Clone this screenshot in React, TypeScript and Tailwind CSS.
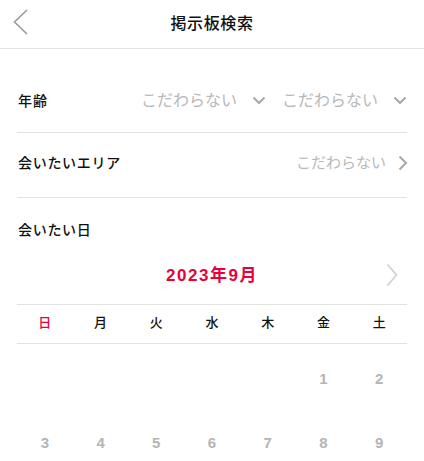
import React from 'react'

const font = { fontFamily: '"Liberation Sans", "Noto Sans CJK JP", "Noto Sans", sans-serif' }

function ChevronDown() {
  return (
    <svg width="14" height="9" viewBox="0 0 14 9" className="shrink-0">
      <path d="M1.5 1.5 L7 7 L12.5 1.5" fill="none" stroke="#a8a8a8" strokeWidth="2" />
    </svg>
  )
}

function ChevronRight({ className = '' }: { className?: string }) {
  return (
    <svg width="10" height="16" viewBox="0 0 10 16" className={className}>
      <path d="M1.5 1.5 L8 8 L1.5 14.5" fill="none" stroke="#a8a8a8" strokeWidth="2" />
    </svg>
  )
}

const weekdays = ['日', '月', '火', '水', '木', '金', '土']
const days: (number | null)[] = [null, null, null, null, null, 1, 2, 3, 4, 5, 6, 7, 8, 9]

export default function App() {
  return (
    <div className="h-[461px] w-[424px] overflow-hidden bg-white text-[#111]" style={font}>
      {/* ヘッダー */}
      <header className="relative flex h-[49px] items-center justify-center border-b border-[#e3e3e3]">
        <button className="absolute left-[13px] top-[9px]">
          <svg width="16" height="26" viewBox="0 0 16 26">
            <path d="M14 1 L1.5 13 L14 25" fill="none" stroke="#9a9a9a" strokeWidth="1.6" />
          </svg>
        </button>
        <h1 className="text-[16px] font-medium tracking-[0.04em]">掲示板検索</h1>
      </header>

      <div className="px-[17px] pt-[20px]">
        <div className="flex h-[64px] items-center border-b border-[#e3e3e3]">
          <span className="pl-px pt-[2px] text-[14px] font-medium tracking-[0.08em]">年齢</span>
          <div className="ml-auto flex items-center">
            <span className="text-[16px] text-[#b8b8b8]">こだわらない</span>
            <span className="ml-[15px]"><ChevronDown /></span>
            <span className="ml-[16px] text-[16px] text-[#b8b8b8]">こだわらない</span>
            <span className="ml-[15px]"><ChevronDown /></span>
          </div>
        </div>

        <div className="flex h-[65px] items-center border-b border-[#e3e3e3] pb-[4px]">
          <span className="pl-px text-[14px] font-medium tracking-[0.05em]">会いたいエリア</span>
          <div className="ml-auto flex items-center">
            <span className="text-[15px] text-[#b8b8b8]">こだわらない</span>
            <ChevronRight className="ml-[12px] mr-[-1px]" />
          </div>
        </div>

        <div className="pt-[20px]">
          <span className="pl-px text-[14px] font-medium tracking-[0.05em]">会いたい日</span>
        </div>

        <div className="relative mt-[21px] flex h-[42px] items-start justify-center border-b border-[#e3e3e3]">
          <span className="text-[17px] font-bold tracking-[0.09em] text-[#e8003d]">2023年9月</span>
          <svg width="12" height="24" viewBox="0 0 12 24" className="absolute right-[9px] top-[0px]">
            <path d="M1.5 1.5 L10.5 12 L1.5 22.5" fill="none" stroke="#cfcfcf" strokeWidth="1.6" />
          </svg>
        </div>

        <div className="grid h-[39px] grid-cols-7 items-center border-b border-[#e3e3e3]">
          {weekdays.map((d, i) => (
            <span
              key={d}
              className={`pb-[2px] text-center text-[13px] font-medium ${i === 0 ? 'text-[#e8003d]' : 'text-[#111]'}`}
            >
              {d}
            </span>
          ))}
        </div>

        <div className="grid grid-cols-7 pt-[3px]">
          {days.map((n, i) => (
            <div key={i} className="flex h-[64px] items-center justify-center">
              {n !== null && <span className="text-[15px] font-bold text-[#b5b5b5]">{n}</span>}
            </div>
          ))}
        </div>
      </div>
    </div>
  )
}
